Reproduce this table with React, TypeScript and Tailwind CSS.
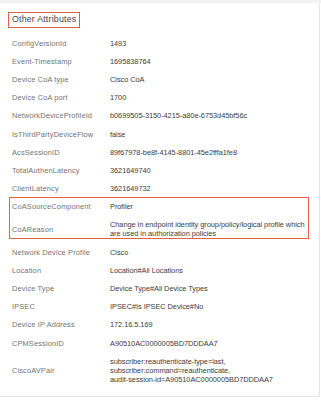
const rowsTop: [string, string[]][] = [
  ["ConfigVersionId", ["1493"]],
  ["Event-Timestamp", ["1695838764"]],
  ["Device CoA type", ["Cisco CoA"]],
  ["Device CoA port", ["1700"]],
  ["NetworkDeviceProfileId", ["b0699505-3150-4215-a80e-6753d45bf56c"]],
  ["IsThirdPartyDeviceFlow", ["false"]],
  ["AcsSessionID", ["89f67978-be8f-4145-8801-45e2fffa1fe8"]],
  ["TotalAuthenLatency", ["3621649740"]],
  ["ClientLatency", ["3621649732"]],
];

const rowsMarked: [string, string[]][] = [
  ["CoASourceComponent", ["Profiler"]],
  [
    "CoAReason",
    [
      "Change in endpoint identity group/policy/logical profile which",
      "are used in authorization policies",
    ],
  ],
];

const rowsBottom: [string, string[]][] = [
  ["Network Device Profile", ["Cisco"]],
  ["Location", ["Location#All Locations"]],
  ["Device Type", ["Device Type#All Device Types"]],
  ["IPSEC", ["IPSEC#Is IPSEC Device#No"]],
  ["Device IP Address", ["172.16.5.169"]],
  ["CPMSessionID", ["A90510AC0000005BD7DDDAA7"]],
  [
    "CiscoAVPair",
    [
      "subscriber:reauthenticate-type=last,",
      "subscriber:command=reauthenticate,",
      "audit-session-id=A90510AC0000005BD7DDDAA7",
    ],
  ],
];

function Row({ label, value }: { label: string; value: string[] }) {
  return (
    <div className="flex items-center py-[4.6px] pl-[12px] leading-[9px]">
      <div className="w-[98px] shrink-0 tracking-[0.15px] text-[#737373]">{label}</div>
      <div className="tracking-[-0.05px] text-[#3d3d3d]">
        {value.map((v) => (
          <div key={v}>{v}</div>
        ))}
      </div>
    </div>
  );
}

export default function App() {
  return (
    <div className="h-[400px] w-[321px] bg-white font-['Liberation_Sans',Arial,sans-serif] text-[7.4px]">
      <div className="h-[3px] bg-[#f2f2f2]" />
      <div className="mr-[1px] h-[394px] border-r border-b border-[#e4e4e4]">
        <div className="pt-[9px] pl-[8px]">
          <div className="inline-flex h-[16px] items-center border-[1.5px] border-[#e3604c] px-[3px] text-[8.8px] tracking-[0.2px] text-[#444]">
            Other Attributes
          </div>
        </div>
        <div className="mt-[6px]">
          {rowsTop.map(([l, v]) => (
            <Row key={l} label={l} value={v} />
          ))}
          <div className="relative">
            {rowsMarked.map(([l, v]) => (
              <Row key={l} label={l} value={v} />
            ))}
            <div className="pointer-events-none absolute top-[-1px] bottom-[4px] left-[9px] w-[300px] border-[1.5px] border-[#e3604c]" />
          </div>
          {rowsBottom.map(([l, v]) => (
            <Row key={l} label={l} value={v} />
          ))}
        </div>
      </div>
    </div>
  );
}
